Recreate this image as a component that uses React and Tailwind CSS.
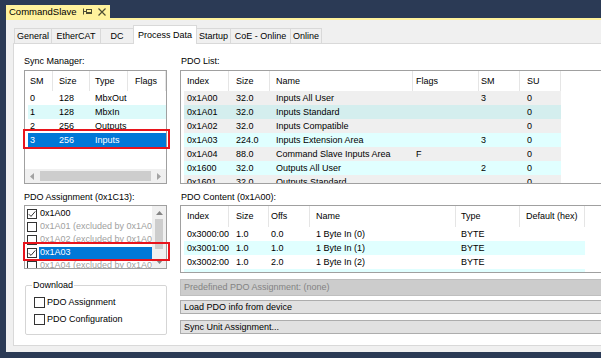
import React from 'react';

const tabs = [
  { label: 'General', w: 'w-[38px]' },
  { label: 'EtherCAT', w: 'w-[50px]' },
  { label: 'DC', w: 'w-[34px]' },
  { label: 'Process Data', w: 'w-[64px]', active: true },
  { label: 'Startup', w: 'w-[35px]' },
  { label: 'CoE - Online', w: 'w-[61px]' },
  { label: 'Online', w: 'w-[32px]' },
];

const smCols = [
  { label: 'SM', cls: 'w-[25px] pl-[2px]' },
  { label: 'Size', cls: 'w-[37px] pl-[6px]' },
  { label: 'Type', cls: 'w-[38px] pl-[5px]' },
  { label: 'Flags', cls: 'w-[38px] pl-[7px]' },
];

const smRows = [
  { cells: ['0', '128', 'MbxOut', ''], bg: 'bg-white' },
  { cells: ['1', '128', 'MbxIn', ''], bg: 'bg-[#dcfafa]' },
  { cells: ['2', '256', 'Outputs', ''], bg: 'bg-white' },
  { cells: ['3', '256', 'Inputs', ''], bg: 'bg-[#0078d7] text-white' },
];

const pdoCols = [
  { label: 'Index', cls: 'w-[45px] pl-[3px]' },
  { label: 'Size', cls: 'w-[41px] pl-[7px]' },
  { label: 'Name', cls: 'w-[143px] pl-[6px]' },
  { label: 'Flags', cls: 'w-[66px] pl-[3px]' },
  { label: 'SM', cls: 'w-[41px] pl-[2px]' },
  { label: 'SU', cls: 'w-[41px] pl-[7px]' },
];

const pdoRows = [
  { cells: ['0x1A00', '32.0', 'Inputs All User', '', '3', '0'], bg: 'bg-[#efefef]' },
  { cells: ['0x1A01', '32.0', 'Inputs Standard', '', '', '0'], bg: 'bg-[#d4eeee]' },
  { cells: ['0x1A02', '32.0', 'Inputs Compatible', '', '', '0'], bg: 'bg-[#efefef]' },
  { cells: ['0x1A03', '224.0', 'Inputs Extension Area', '', '3', '0'], bg: 'bg-[#e0ffff]' },
  { cells: ['0x1A04', '88.0', 'Command Slave Inputs Area', 'F', '', '0'], bg: 'bg-[#efefef]' },
  { cells: ['0x1600', '32.0', 'Outputs All User', '', '2', '0'], bg: 'bg-[#e0ffff]' },
  { cells: ['0x1601', '32.0', 'Outputs Standard', '', '', '0'], bg: 'bg-[#efefef]' },
];

const contentCols = [
  { label: 'Index', cls: 'w-[45px] pl-[3px]' },
  { label: 'Size', cls: 'w-[40px] pl-[7px]' },
  { label: 'Offs', cls: 'w-[41px] pl-[2px]' },
  { label: 'Name', cls: 'w-[146px] pl-[6px]' },
  { label: 'Type', cls: 'w-[64px] pl-[5px]' },
  { label: 'Default (hex)', cls: 'w-[65px] pl-[6px]' },
];

const contentRows = [
  { cells: ['0x3000:00', '1.0', '0.0', '1 Byte In (0)', 'BYTE', ''], bg: 'bg-white' },
  { cells: ['0x3001:00', '1.0', '1.0', '1 Byte In (1)', 'BYTE', ''], bg: 'bg-[#e0ffff]' },
  { cells: ['0x3002:00', '1.0', '2.0', '1 Byte In (2)', 'BYTE', ''], bg: 'bg-white' },
  { cells: ['0x3003:00', '1.0', '3.0', '1 Byte In (3)', 'BYTE', ''], bg: 'bg-[#e0ffff]' },
];

const assignItems = [
  { label: '0x1A00', checked: true },
  { label: '0x1A01 (excluded by 0x1A00)', dim: true },
  { label: '0x1A02 (excluded by 0x1A00)', dim: true },
  { label: '0x1A03', checked: true, selected: true },
  { label: '0x1A04 (excluded by 0x1A03)', dim: true },
];

const CheckBox = ({ checked, size = 'h-[10px] w-[10px]' }) => (
  <span className={`flex shrink-0 items-center justify-center border border-[#333333] bg-white ${size}`}>
    {checked && (
      <svg viewBox="0 0 8 8" className="h-[8px] w-[8px]">
        <path d="M0.8 4.2 L3 6.4 L7.3 1.4" fill="none" stroke="#333333" strokeWidth="1" />
      </svg>
    )}
  </span>
);

const ListHeader = ({ columns, height }) => (
  <div className={`flex shrink-0 items-center pl-[3px] ${height}`}>
    {columns.map((col) => (
      <div key={col.label} className={`flex h-full shrink-0 items-center whitespace-nowrap border-r border-[#e5e5e5] ${col.cls}`}>
        {col.label}
      </div>
    ))}
  </div>
);

const ListRows = ({ columns, rows }) => (
  <>
    {rows.map((row, i) => (
      <div key={i} className="flex shrink-0 pl-[3px]">
        <div className={`flex h-[14px] items-center ${row.bg}`}>
          {row.cells.map((cell, j) => (
            <div key={j} className={`shrink-0 whitespace-nowrap ${columns[j].cls}`}>
              {cell}
            </div>
          ))}
        </div>
      </div>
    ))}
  </>
);

const HScroll = () => (
  <div className="flex h-[14px] shrink-0 items-center bg-[#f0f0f0]">
    <div className="flex h-full w-[14px] items-center justify-center">
      <svg width="4" height="7" viewBox="0 0 4 7"><path d="M4 0 L0 3.5 L4 7Z" fill="#a3a3a3" /></svg>
    </div>
    <div className="mx-[1px] h-[10px] flex-1 bg-[#cdcdcd]" />
    <div className="flex h-full w-[14px] items-center justify-center">
      <svg width="4" height="7" viewBox="0 0 4 7"><path d="M0 0 L4 3.5 L0 7Z" fill="#a3a3a3" /></svg>
    </div>
  </div>
);

const VScroll = () => (
  <div className="flex w-[14px] shrink-0 flex-col items-center bg-[#f0f0f0]">
    <div className="flex h-[13px] items-center">
      <svg width="7" height="4" viewBox="0 0 7 4"><path d="M0 4 L3.5 0 L7 4Z" fill="#858585" /></svg>
    </div>
    <div className="h-[30px] w-[8px] bg-[#cdcdcd]" />
    <div className="flex-1" />
    <div className="flex h-[13px] items-center">
      <svg width="7" height="4" viewBox="0 0 7 4"><path d="M0 0 L3.5 4 L7 0Z" fill="#858585" /></svg>
    </div>
  </div>
);

export default function App() {
  return (
    <div className="flex h-[358px] w-[601px] flex-col overflow-hidden bg-[#2b3a55] font-['Liberation_Sans',Arial,sans-serif] text-[9px] leading-[11px] text-black">
      {/* document tab */}
      <div className="flex h-[18px] shrink-0 items-end pl-[6px]">
        <div className="flex h-[13px] w-[104px] items-center bg-[#fff29d] pl-[3px] pr-[4px] text-[9.5px]">
          <span>CommandSlave</span>
          <svg className="ml-auto" width="9" height="7" viewBox="0 0 9 7">
            <path d="M0.5 0.5 V6.5 M0.5 3.5 H3.5" stroke="#4d4d33" strokeWidth="1" fill="none" />
            <rect x="3.5" y="1.5" width="5" height="4" stroke="#4d4d33" strokeWidth="1" fill="none" />
            <path d="M3.5 4.5 H8.5" stroke="#4d4d33" strokeWidth="1" />
          </svg>
          <svg className="ml-[6px]" width="8" height="8" viewBox="0 0 8 8">
            <path d="M0.5 0.5 L7.5 7.5 M7.5 0.5 L0.5 7.5" stroke="#4d4d33" strokeWidth="1.2" />
          </svg>
        </div>
      </div>
      <div className="ml-[6px] h-[2px] shrink-0 bg-[#fff29d]" />

      {/* window */}
      <div className="ml-[6px] flex min-h-0 flex-1 flex-col bg-[#f0f0f0] pb-[6px] pl-[7px] pt-[6px]">
        <div className="relative z-10 flex h-[17px] shrink-0 items-end pl-[1px]">
          {tabs.map((tab, i) => (
            <div
              key={tab.label}
              className={`flex shrink-0 items-center justify-center border border-b-0 border-[#d9d9d9] ${tab.w} ${i > 0 ? '-ml-px' : ''} ${
                tab.active ? 'relative -mb-px h-[19px] bg-white' : 'h-[15px] bg-[#f0f0f0]'
              }`}
            >
              {tab.label}
            </div>
          ))}
        </div>

        <div className="flex min-h-0 flex-1 gap-[13px] border border-r-0 border-[#d9d9d9] bg-white pl-[10px] pt-[11px]">
          {/* left column */}
          <div className="flex w-[143px] shrink-0 flex-col">
            <div className="h-[12px] leading-[12px]">Sync Manager:</div>
            <div className="relative mt-[3px] flex h-[114px] shrink-0 flex-col border border-[#a0a0a0] bg-white">
              <ListHeader columns={smCols} height="h-[20px]" />
              <ListRows columns={smCols} rows={smRows} />
              <div className="flex-1" />
              <HScroll />
              <div className="pointer-events-none absolute left-[-2px] right-[-4px] top-[58px] h-[20px] border-2 border-[#e8141c]" />
            </div>

            <div className="mt-[7px] h-[12px] leading-[12px]">PDO Assignment (0x1C13):</div>
            <div className="relative mt-[2px] flex h-[64px] shrink-0 border border-[#a0a0a0] bg-white">
              <div className="flex min-w-0 flex-1 flex-col overflow-hidden pt-[1px]">
                {assignItems.map((item) => (
                  <div key={item.label} className="flex h-[13px] shrink-0 items-center pl-[2px]">
                    <CheckBox checked={item.checked} />
                    <div
                      className={`ml-[2px] flex h-[12px] min-w-0 flex-1 items-center overflow-hidden whitespace-nowrap px-[1px] ${
                        item.selected ? 'bg-[#0078d7] text-white' : item.dim ? 'text-[#a0a0a0]' : ''
                      }`}
                    >
                      {item.label}
                    </div>
                  </div>
                ))}
              </div>
              <VScroll />
              <div className="pointer-events-none absolute left-[-2px] right-[-4px] top-[36px] h-[19px] border-2 border-[#e8141c]" />
            </div>

            <fieldset className="ml-[1px] mt-[11px] h-[55px] w-[142px] shrink-0 rounded-[2px] border border-[#d5d5d5] pl-[6px]">
              <legend className="px-[1px] leading-[11px]">Download</legend>
              <label className="ml-[2px] mt-[6px] flex h-[11px] items-center gap-[2px]">
                <CheckBox size="h-[11px] w-[11px]" />
                <span>PDO Assignment</span>
              </label>
              <label className="ml-[2px] mt-[6px] flex h-[11px] items-center gap-[2px]">
                <CheckBox size="h-[11px] w-[11px]" />
                <span>PDO Configuration</span>
              </label>
            </fieldset>
          </div>

          {/* right column */}
          <div className="flex w-[440px] shrink-0 flex-col">
            <div className="h-[12px] pl-[1px] leading-[12px]">PDO List:</div>
            <div className="mt-[3px] flex h-[114px] shrink-0 flex-col overflow-hidden border border-r-0 border-[#a0a0a0] bg-white">
              <ListHeader columns={pdoCols} height="h-[20px]" />
              <ListRows columns={pdoCols} rows={pdoRows} />
            </div>

            <div className="mt-[7px] h-[12px] pl-[1px] leading-[12px]">PDO Content (0x1A00):</div>
            <div className="mt-[2px] flex h-[68px] shrink-0 flex-col overflow-hidden border border-r-0 border-[#a0a0a0] bg-white">
              <ListHeader columns={contentCols} height="h-[21px]" />
              <ListRows columns={contentCols} rows={contentRows} />
            </div>

            <button disabled className="mt-[6px] flex h-[17px] shrink-0 items-center border border-r-0 border-[#bfbfbf] bg-[#cccccc] pl-[3px] text-left text-[#838383]">
              Predefined PDO Assignment: (none)
            </button>
            <button className="mt-[4px] flex h-[14px] shrink-0 items-center border border-r-0 border-[#adadad] bg-[#e1e1e1] pl-[3px] text-left">
              Load PDO info from device
            </button>
            <button className="mt-[6px] flex h-[14px] shrink-0 items-center border border-r-0 border-[#adadad] bg-[#e1e1e1] pl-[3px] text-left">
              Sync Unit Assignment...
            </button>
          </div>
        </div>
      </div>
      <div className="h-[6px] shrink-0" />
    </div>
  );
}
